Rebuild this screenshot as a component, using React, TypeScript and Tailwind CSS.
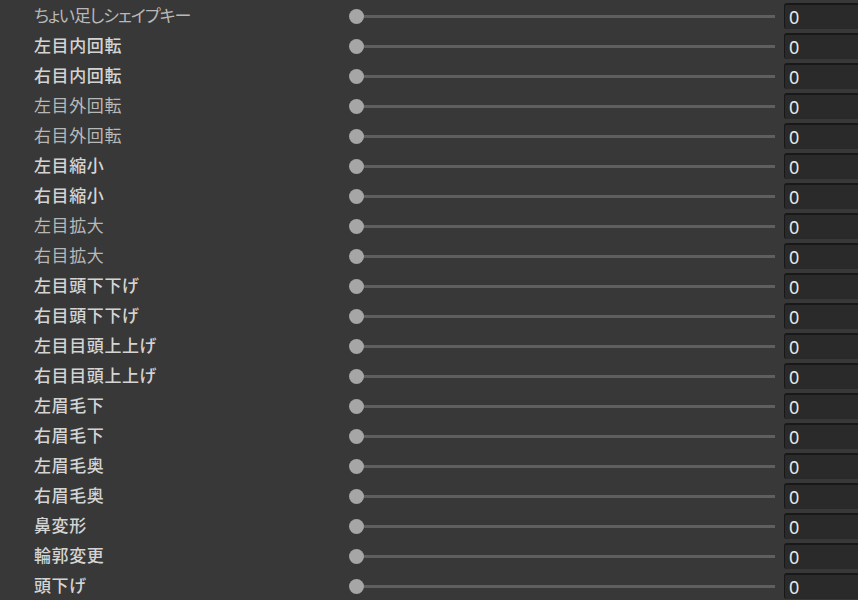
const rows: { label: string; bold: boolean }[] = [
  { label: "ちょい足しシェイプキー", bold: false },
  { label: "左目内回転", bold: true },
  { label: "右目内回転", bold: true },
  { label: "左目外回転", bold: false },
  { label: "右目外回転", bold: false },
  { label: "左目縮小", bold: true },
  { label: "右目縮小", bold: true },
  { label: "左目拡大", bold: false },
  { label: "右目拡大", bold: false },
  { label: "左目頭下下げ", bold: true },
  { label: "右目頭下下げ", bold: true },
  { label: "左目目頭上上げ", bold: true },
  { label: "右目目頭上上げ", bold: true },
  { label: "左眉毛下", bold: true },
  { label: "右眉毛下", bold: true },
  { label: "左眉毛奥", bold: true },
  { label: "右眉毛奥", bold: true },
  { label: "鼻変形", bold: true },
  { label: "輪郭変更", bold: true },
  { label: "頭下げ", bold: true },
];

export default function App() {
  return (
    <div className="h-[600px] w-[858px] overflow-hidden bg-[#383838] pt-px font-['Noto_Sans','Noto_Sans_CJK_JP',sans-serif]">
      {rows.map((row, i) => (
        <div key={row.label} className="flex h-[30px] items-center pl-[34px]">
          <span
            className={
              i === 0
                ? "w-[315px] shrink-0 text-[17px] text-[#b8b8b8] [font-feature-settings:'palt'] tracking-[-1px]"
                : row.bold
                  ? "w-[315px] shrink-0 text-[17px] font-medium text-[#d4d4d4] tracking-[0.6px]"
                  : "w-[315px] shrink-0 text-[17px] text-[#b8b8b8] tracking-[0.6px]"
            }
          >
            {row.label}
          </span>
          <div className="relative flex h-[15px] w-[426px] shrink-0 items-center">
            <div className="ml-[7px] h-[3px] flex-1 bg-[#5f5f5f]" />
            <div className="absolute left-0 top-0 size-[15px] rounded-full bg-[#a6a6a6]" />
          </div>
          <div className="ml-[9px] flex h-[26px] w-[90px] shrink-0 items-center rounded-[3px] border-t-2 border-l border-[#181818] bg-[#2a2a2a] pl-[4px] text-[18px] text-[#e8e8e8]">
            0
          </div>
        </div>
      ))}
    </div>
  );
}
